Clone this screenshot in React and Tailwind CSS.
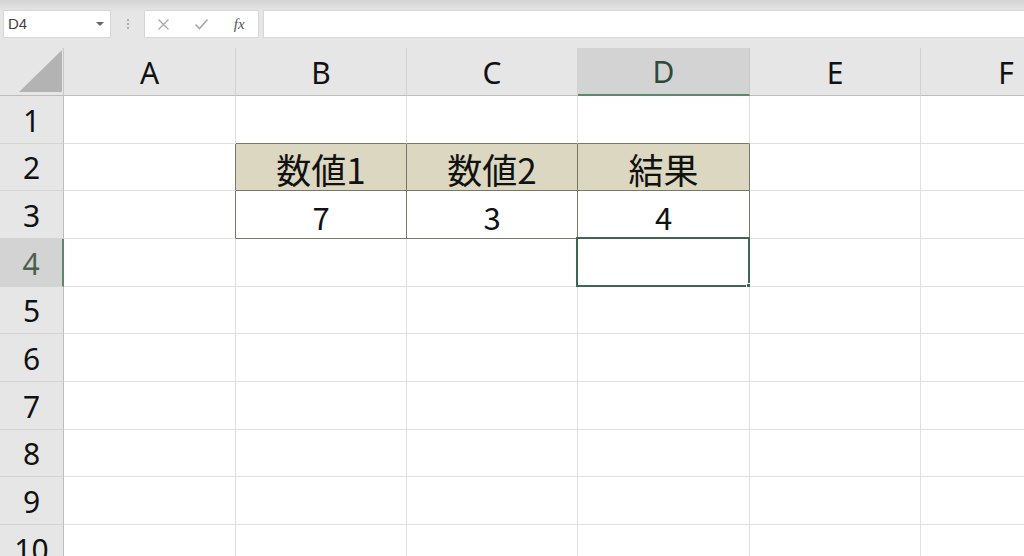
import React from "react";

const COLS = ["A", "B", "C", "D", "E", "F"];
const ROWS = [1, 2, 3, 4, 5, 6, 7, 8, 9, 10];

const cellData = {
  "B2": "数値1",
  "C2": "数値2",
  "D2": "結果",
  "B3": "7",
  "C3": "3",
  "D3": "4",
};

const inTable = (c, r) => ["B", "C", "D"].includes(c) && (r === 2 || r === 3);

function Cell({ c, r }) {
  const key = c + r;
  const table = inTable(c, r);
  const rightDark = table || (c === "A" && (r === 2 || r === 3));
  const bottomDark = table || (r === 1 && ["B", "C", "D"].includes(c));
  const fill = r === 2 && table ? "bg-[#dbd7c0]" : "bg-white";
  const rb = rightDark ? "border-r-[#77776a]" : "border-r-[#e0e0e0]";
  const bb = bottomDark ? "border-b-[#77776a]" : "border-b-[#e0e0e0]";
  const selected = key === "D4";
  const size = r === 2 ? "text-[35px]" : "text-[31px]";
  return (
    <div
      className={`relative box-border border-r border-b ${rb} ${bb} ${fill} flex items-center justify-center ${size} leading-none text-[#111] [font-family:'Noto_Sans_CJK_JP','Noto_Sans',sans-serif]`}
    >
      {cellData[key] && <span className="pt-[3px]">{cellData[key]}</span>}
      {selected && (
        <div className="absolute left-[-2px] top-[-2px] right-[-1px] bottom-[-1px] border-2 border-[#3f6650]">
          <div className="absolute right-[-4px] bottom-[-4px] w-[6px] h-[6px] bg-[#3f6650] border border-white" />
        </div>
      )}
    </div>
  );
}

export default function App() {
  return (
    <div className="w-[1024px] h-[556px] overflow-hidden bg-[#e6e6e6] [font-family:'Noto_Sans',sans-serif]">
      {/* top strip */}
      <div className="h-[10px] bg-gradient-to-b from-[#d4d4d4] to-[#e4e4e4]" />
      {/* formula bar */}
      <div className="h-[28px] flex">
        <div className="ml-[3px] w-[108px] h-full bg-white border border-[#d6d6d6] box-border flex items-center pl-[4px] pr-[6px]">
          <span className="text-[15px] text-[#444] [font-family:'Liberation_Sans',sans-serif]">D4</span>
          <div className="ml-auto w-0 h-0 border-l-[4px] border-r-[4px] border-t-[4px] border-l-transparent border-r-transparent border-t-[#666]" />
        </div>
        <div className="w-[33px] h-full flex flex-col items-center justify-center gap-[2px]">
          <div className="w-[2px] h-[2px] bg-[#9a9a9a] rounded-full" />
          <div className="w-[2px] h-[2px] bg-[#9a9a9a] rounded-full" />
          <div className="w-[2px] h-[2px] bg-[#9a9a9a] rounded-full" />
        </div>
        <div className="w-[115px] h-full bg-white border border-[#d6d6d6] box-border flex items-center">
          <div className="w-[38px] flex justify-center">
            <svg width="13" height="13" viewBox="0 0 13 13">
              <path d="M1.5 1.5 L11.5 11.5 M11.5 1.5 L1.5 11.5" stroke="#a8a8a8" strokeWidth="1.3" fill="none" />
            </svg>
          </div>
          <div className="w-[38px] flex justify-center">
            <svg width="15" height="12" viewBox="0 0 15 12">
              <path d="M1.5 6.5 L5.5 10.5 L13.5 1.5" stroke="#a8a8a8" strokeWidth="1.6" fill="none" />
            </svg>
          </div>
          <div className="w-[38px] flex justify-center">
            <span className="italic text-[15px] text-[#555] [font-family:'Liberation_Serif',serif]">fx</span>
          </div>
        </div>
        <div className="ml-[4px] flex-1 h-full bg-white border-y border-l border-[#d6d6d6] box-border" />
      </div>
      <div className="h-[10px]" />
      {/* sheet */}
      <div className="grid grid-cols-[64px_172px_171px_171px_172px_171px_171px] grid-rows-[48px_48px_47px_48px_48px_47px_48px_48px_47px_48px_48px]">
        {/* corner */}
        <div className="box-border border-r border-b border-r-[#c8c8c8] border-b-[#bcbcbc] bg-[#e6e6e6] flex items-end justify-end pr-[1px] pb-[3px]">
          <svg width="43" height="42" viewBox="0 0 43 42">
            <polygon points="43,0 43,42 0,42" fill="#b3b3b3" />
          </svg>
        </div>
        {COLS.map((c) => {
          const sel = c === "D";
          return (
            <div
              key={c}
              className={`box-border flex items-center justify-center text-[30px] leading-none ${
                sel
                  ? "bg-[#d3d3d3] border-b-2 border-b-[#5a8a6e] border-r border-r-[#c8c8c8] text-[#2e4a3a]"
                  : "bg-[#e6e6e6] border-b border-b-[#bcbcbc] border-r border-r-[#d2d2d2] text-[#111]"
              }`}
            >
              <span className="pt-[2px]">{c}</span>
            </div>
          );
        })}
        {ROWS.map((r) => (
          <React.Fragment key={r}>
            <div
              className={`box-border flex items-center justify-center text-[30px] leading-none border-b border-b-[#d4d4d4] ${
                r === 4
                  ? "bg-[#d3d3d3] border-r-2 border-r-[#5a8a6e] text-[#47604f]"
                  : "bg-[#e6e6e6] border-r border-r-[#bcbcbc] text-[#111]"
              }`}
            >
              <span className="pt-[2px]">{r}</span>
            </div>
            {COLS.map((c) => (
              <Cell key={c + r} c={c} r={r} />
            ))}
          </React.Fragment>
        ))}
      </div>
    </div>
  );
}
